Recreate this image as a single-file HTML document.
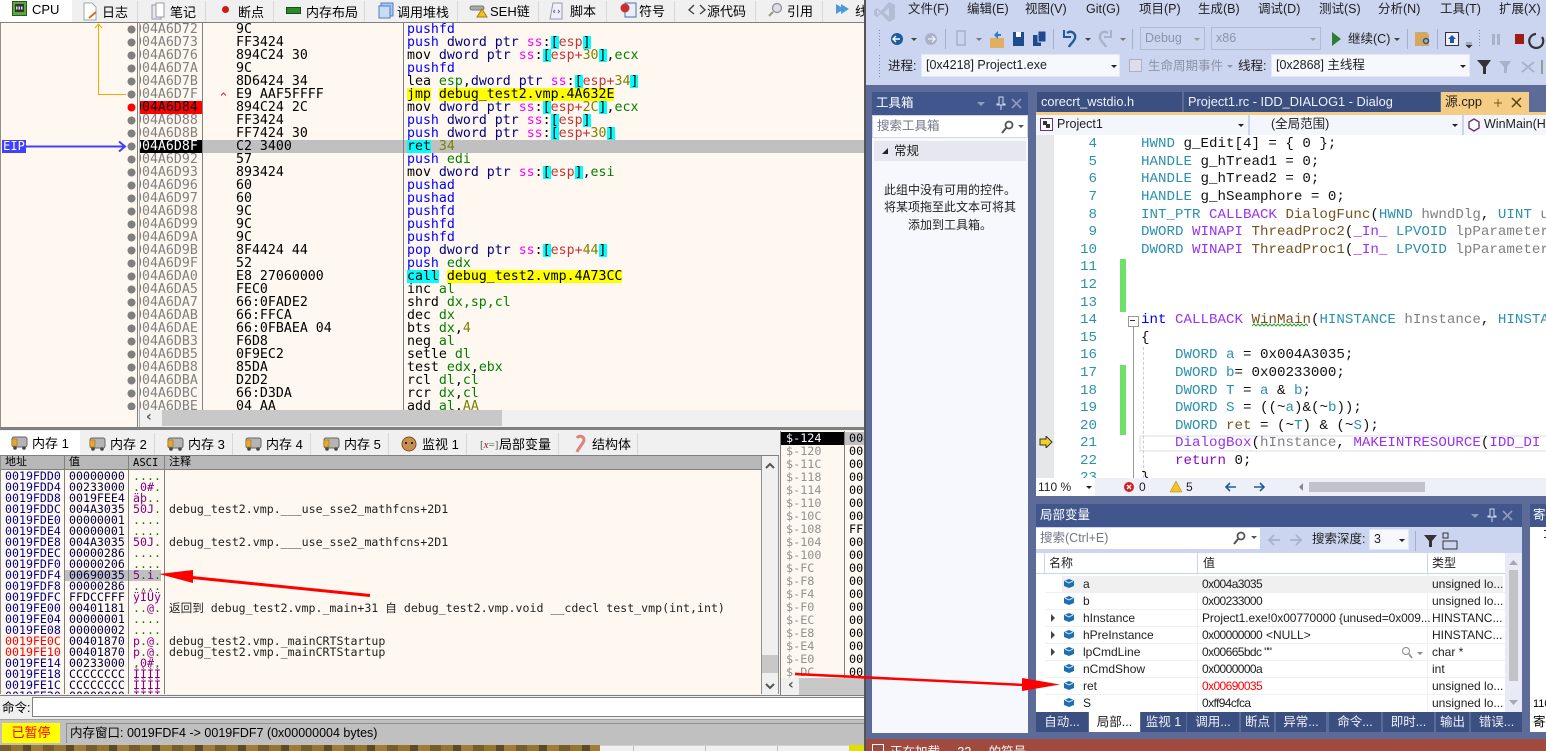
<!DOCTYPE html>
<html><head><meta charset="utf-8"><style>
html,body{margin:0;padding:0;width:1546px;height:751px;overflow:hidden;background:#f0f0f0}
body{position:relative;font:13px "Liberation Sans","Noto Sans CJK SC",sans-serif;color:#000}
.a{position:absolute}
pre{margin:0;position:absolute;white-space:pre}
.d{font:13.25px/13px "DejaVu Sans Mono",monospace}
.m{font:11.6px/11px "DejaVu Sans Mono","Noto Sans CJK SC",monospace}
.k{color:#0000ff}.n{color:#000080}.s{color:#ff00ff}.r{color:#c83232}.o{color:#808000}.g{color:#008000}
.c{display:inline-block;height:13px;line-height:13px;background:#00ffff;vertical-align:top}
.y{display:inline-block;height:13px;line-height:13px;background:#ffff00;vertical-align:top}
.tab{position:absolute;top:1px;height:21px;background:#f0f0f0;border-right:1px solid #d8d8d8;box-sizing:border-box}
.tt{position:absolute;white-space:nowrap;font-size:13px;line-height:16px}
.p{color:#800080}.dg{color:#008000}
.v{position:absolute;white-space:nowrap;font-size:12px;line-height:16px;color:#1e1e1e}
.hx{letter-spacing:-.6px}
.vl{position:absolute;white-space:pre;font:14.17px/17px "Liberation Mono","Noto Sans CJK SC",monospace;color:#111;left:1141px;margin-top:1px}
.ln{position:absolute;left:1060px;width:37px;text-align:right;font:14.17px/17px "Liberation Mono",monospace;color:#2b91af;margin-top:1px}
.ty{color:#2b91af}.mc{color:#9a30f0}.fn{color:#74531f}.pa{color:#808080}.kw{color:#0000ff}.rt{color:#8f08c4}
.row{position:absolute;left:1045px;width:460px;height:16px;border-bottom:1px solid #eef0f6}
.bt{position:absolute;top:712px;height:20px;background:#3b4f81;color:#f0f2fa;font-size:12.5px;line-height:20px;text-align:center;white-space:nowrap}
.cb{position:absolute;background:#f6f8fe;box-sizing:border-box;border:1px solid #e3e8f8;font-size:12.5px;line-height:21px;color:#1e1e1e;white-space:nowrap;padding-left:4px}
.arr{position:absolute;width:0;height:0;border-left:3px solid transparent;border-right:3px solid transparent;border-top:3px solid #222}
</style></head><body>

<!-- left window -->
<div class="a" style="left:0;top:0;width:865px;height:751px;background:#f0f0f0"></div>
<div class="a" style="left:0;top:0;width:72px;height:23px;background:#fff"></div>
<div class="tab" style="left:72px;width:66px"></div><div class="tab" style="left:138px;width:68px"></div><div class="tab" style="left:206px;width:68px"></div><div class="tab" style="left:274px;width:91px"></div><div class="tab" style="left:365px;width:93px"></div><div class="tab" style="left:458px;width:81px"></div><div class="tab" style="left:539px;width:68px"></div><div class="tab" style="left:607px;width:68px"></div><div class="tab" style="left:675px;width:81px"></div><div class="tab" style="left:756px;width:67px"></div><div class="tab" style="left:823px;width:42px"></div>
<div class="tt" style="left:32px;top:2px">CPU</div><div class="tt" style="left:102px;top:5px">日志</div><div class="tt" style="left:170px;top:5px">笔记</div><div class="tt" style="left:238px;top:5px">断点</div><div class="tt" style="left:306px;top:5px">内存布局</div><div class="tt" style="left:397px;top:5px">调用堆栈</div><div class="tt" style="left:490px;top:4px">SEH链</div><div class="tt" style="left:570px;top:4px">脚本</div><div class="tt" style="left:639px;top:4px">符号</div><div class="tt" style="left:707px;top:4px">源代码</div><div class="tt" style="left:787px;top:4px">引用</div><div class="tt" style="left:855px;top:4px;width:10px;overflow:hidden">线</div>
<svg class="a" style="left:0;top:0" width="865" height="23">
<rect x="12.500" y="1.500" width="14" height="14" fill="#5aa83c" stroke="#2a5a20"/><rect x="15" y="4" width="9" height="8" fill="#333"/><path d="M16 8h7" stroke="#ddd" stroke-width="3" stroke-dasharray="1.500 1"/>
<path d="M84 3h8l4 4v13h-12z" fill="#fff" stroke="#9aa"/><path d="M89 18l7-6" stroke="#d07020" stroke-width="2"/>
<path d="M152 5h9v14h-9z" fill="#e8e8ee" stroke="#99a"/><path d="M156 3h8v14h-8z" fill="#fff" stroke="#99a"/>
<circle cx="225.500" cy="9.500" r="3.500" fill="#d01818"/>
<rect x="286.500" y="7.500" width="14" height="6" fill="#2a8a2a" stroke="#145014"/>
<rect x="381" y="3" width="12" height="13" fill="#a8c8f0" stroke="#5080c0"/><rect x="379" y="6" width="11" height="12" fill="#c8dcf8" stroke="#5080c0"/>
<rect x="470" y="6" width="14" height="4" rx="2" fill="#aaa" stroke="#777"/><path d="M477 17l5-8 5 8z" fill="#f5c020" stroke="#a08010"/>
<path d="M553 3h9v16h-12z" fill="#eef" stroke="#99a"/><path d="M555 10l-1.500 1.500 1.500 1.500M558 10l1.500 1.500-1.500 1.500" fill="none" stroke="#668"/>
<rect x="625" y="3" width="11" height="14" fill="#e8eefc" stroke="#5070a0"/><circle cx="625" cy="8" r="4.500" fill="#c83030"/>
<path d="M694 5l-5 5 5 4M700 5l5 5-5 4" fill="none" stroke="#444" stroke-width="1.400"/>
<circle cx="777" cy="8" r="4.500" fill="#dde" stroke="#999" stroke-width="1.400"/><path d="M773 12l-4 4" stroke="#998" stroke-width="2"/>
<path d="M836 4l8 5-8 5zM841 4l8 5-8 5z" fill="#4a9ae0"/>
</svg>
<div class="a" style="left:0;top:22px;width:865px;height:1px;background:#808080"></div>

<!-- disasm -->
<div class="a" style="left:0;top:23px;width:865px;height:387px;background:#fff8f0;overflow:hidden">
<div class="a" style="left:140px;top:117px;width:725px;height:13px;background:#c0c0c0"></div>
<div class="a" style="left:140px;top:117px;width:62px;height:13px;background:#000"></div>
<div class="a" style="left:140px;top:78px;width:62px;height:13px;background:#ff0000"></div>
<pre class="d" style="left:134px;top:0;color:#808080;width:68px">004A6D72
004A6D73
004A6D76
004A6D7A
004A6D7B
004A6D7F
<span style="color:#000">004A6D84</span>
004A6D88
004A6D8B
<span style="color:#fff">004A6D8F</span>
004A6D92
004A6D93
004A6D96
004A6D97
004A6D98
004A6D99
004A6D9A
004A6D9B
004A6D9F
004A6DA0
004A6DA5
004A6DA7
004A6DAB
004A6DAE
004A6DB3
004A6DB5
004A6DB8
004A6DBA
004A6DBC
004A6DBE</pre>
<div class="a" style="left:0;top:0;width:139.500px;height:387px;background:#fff8f0"></div>
<pre class="d" style="left:236px;top:0;color:#000">9C
FF3424
894C24 30
9C
8D6424 34
E9 AAF5FFFF
894C24 2C
FF3424
FF7424 30
C2 3400
57
893424
60
60
9C
9C
9C
8F4424 44
52
E8 27060000
FEC0
66:0FADE2
66:FFCA
66:0FBAEA 04
F6D8
0F9EC2
85DA
D2D2
66:D3DA
04 AA</pre>
<pre class="d" style="left:407px;top:0;color:#000"><span class="k">pushfd</span>
<span class="k">push</span> <span class="n">dword ptr</span> <span class="s">ss</span>:<span class="c">[</span><span class="r">esp</span><span class="c">]</span>
mov <span class="n">dword ptr</span> <span class="s">ss</span>:<span class="c">[</span><span class="r">esp+</span><span class="o">30</span><span class="c">]</span>,<span class="g">ecx</span>
<span class="k">pushfd</span>
lea <span class="g">esp</span>,<span class="n">dword ptr</span> <span class="s">ss</span>:<span class="c">[</span><span class="r">esp+</span><span class="o">34</span><span class="c">]</span>
<span class="y">jmp</span> <span class="y">debug_test2.vmp.4A632E</span>
mov <span class="n">dword ptr</span> <span class="s">ss</span>:<span class="c">[</span><span class="r">esp+</span><span class="o">2C</span><span class="c">]</span>,<span class="g">ecx</span>
<span class="k">push</span> <span class="n">dword ptr</span> <span class="s">ss</span>:<span class="c">[</span><span class="r">esp</span><span class="c">]</span>
<span class="k">push</span> <span class="n">dword ptr</span> <span class="s">ss</span>:<span class="c">[</span><span class="r">esp+</span><span class="o">30</span><span class="c">]</span>
<span class="c">ret</span> <span class="o">34</span>
<span class="k">push</span> <span class="g">edi</span>
mov <span class="n">dword ptr</span> <span class="s">ss</span>:<span class="c">[</span><span class="r">esp</span><span class="c">]</span>,<span class="g">esi</span>
<span class="k">pushad</span>
<span class="k">pushad</span>
<span class="k">pushfd</span>
<span class="k">pushfd</span>
<span class="k">pushfd</span>
<span class="k">pop</span> <span class="n">dword ptr</span> <span class="s">ss</span>:<span class="c">[</span><span class="r">esp+</span><span class="o">44</span><span class="c">]</span>
<span class="k">push</span> <span class="g">edx</span>
<span class="c">call</span> <span class="y">debug_test2.vmp.4A73CC</span>
inc <span class="g">al</span>
shrd <span class="g">dx,sp,cl</span>
dec <span class="g">dx</span>
bts <span class="g">dx</span>,<span class="o">4</span>
neg <span class="g">al</span>
setle <span class="g">dl</span>
test <span class="g">edx</span>,<span class="g">ebx</span>
rcl <span class="g">dl</span>,<span class="g">cl</span>
rcr <span class="g">dx</span>,<span class="g">cl</span>
add <span class="g">al</span>,<span class="o">AA</span></pre>
<div class="a" style="left:2px;top:117px;width:24px;height:13px;background:#4040ff;color:#fff;font:12px/13px 'DejaVu Sans Mono',monospace;text-align:center">EIP</div>
</div>
<svg class="a" style="left:0;top:23px" width="240" height="388">
<path d="M98.500 2V71.500H126" fill="none" stroke="#ffa500"/><path d="M95 5l3.500-4 3.500 4" fill="none" stroke="#ffa500"/>
<path d="M221 72.500l2.500-2.500 2.500 2.500" fill="none" stroke="#e02020"/>
<path d="M26 123.500H124M119 118.500l6 5-6 5" fill="none" stroke="#4040ff" stroke-width="2"/>
<g fill="#808080"><circle cx="131.500" cy="6.500" r="4"/><circle cx="131.500" cy="19.500" r="4"/><circle cx="131.500" cy="32.500" r="4"/><circle cx="131.500" cy="45.500" r="4"/><circle cx="131.500" cy="58.500" r="4"/><circle cx="131.500" cy="71.500" r="4"/><circle cx="131.500" cy="84.500" r="4" fill="#ff0000"/><circle cx="131.500" cy="97.500" r="4"/><circle cx="131.500" cy="110.500" r="4"/><circle cx="131.500" cy="123.500" r="4"/><circle cx="131.500" cy="136.500" r="4"/><circle cx="131.500" cy="149.500" r="4"/><circle cx="131.500" cy="162.500" r="4"/><circle cx="131.500" cy="175.500" r="4"/><circle cx="131.500" cy="188.500" r="4"/><circle cx="131.500" cy="201.500" r="4"/><circle cx="131.500" cy="214.500" r="4"/><circle cx="131.500" cy="227.500" r="4"/><circle cx="131.500" cy="240.500" r="4"/><circle cx="131.500" cy="253.500" r="4"/><circle cx="131.500" cy="266.500" r="4"/><circle cx="131.500" cy="279.500" r="4"/><circle cx="131.500" cy="292.500" r="4"/><circle cx="131.500" cy="305.500" r="4"/><circle cx="131.500" cy="318.500" r="4"/><circle cx="131.500" cy="331.500" r="4"/><circle cx="131.500" cy="344.500" r="4"/><circle cx="131.500" cy="357.500" r="4"/><circle cx="131.500" cy="370.500" r="4"/><circle cx="131.500" cy="383.500" r="4"/></g>
</svg>
<div class="a" style="left:0;top:410px;width:137px;height:17px;background:#fff8f0"></div>
<div class="a" style="left:0;top:23px;width:1px;height:404px;background:#909090"></div>
<div class="a" style="left:137px;top:23px;width:1px;height:404px;background:#808080"></div>
<div class="a" style="left:139px;top:23px;width:1px;height:404px;background:#b0b0b0"></div>
<div class="a" style="left:202px;top:23px;width:1px;height:387px;background:#808080"></div>
<div class="a" style="left:403px;top:23px;width:1px;height:387px;background:#808080"></div>
<div class="a" style="left:140px;top:410px;width:725px;height:16px;background:#f0f0f0"></div>
<div class="a" style="left:162px;top:410px;width:340px;height:16px;background:#c8c8c8"></div>
<div class="a" style="left:146px;top:410px;font:bold 14px/15px 'DejaVu Sans',sans-serif;color:#555">‹</div>
<div class="a" style="left:0;top:427px;width:865px;height:3px;background:#808080"></div>

<!-- bottom tabs -->
<div class="a" style="left:0;top:431px;width:80px;height:25px;background:#fff"></div>
<div class="tab" style="left:80px;top:433px;width:75px;height:22px"></div><div class="tab" style="left:155px;top:433px;width:78px;height:22px"></div><div class="tab" style="left:233px;top:433px;width:78px;height:22px"></div><div class="tab" style="left:311px;top:433px;width:78px;height:22px"></div><div class="tab" style="left:389px;top:433px;width:78px;height:22px"></div><div class="tab" style="left:467px;top:433px;width:92px;height:22px"></div><div class="tab" style="left:559px;top:433px;width:79px;height:22px"></div>
<div class="tt" style="left:32px;top:436px">内存 1</div><div class="tt" style="left:110px;top:437px">内存 2</div><div class="tt" style="left:188px;top:437px">内存 3</div><div class="tt" style="left:266px;top:437px">内存 4</div><div class="tt" style="left:344px;top:437px">内存 5</div><div class="tt" style="left:422px;top:437px">监视 1</div>
<div class="tt" style="left:480px;top:437px;font:11px/16px 'Liberation Serif',serif;color:#555">[<i style="color:#802020">x</i>=]</div><div class="tt" style="left:499px;top:437px">局部变量</div><div class="tt" style="left:592px;top:437px">结构体</div>
<svg class="a" style="left:0;top:431px" width="640" height="24">
<defs><g id="tr"><rect x="0" y="2" width="15" height="10" rx="2" fill="#b4b4b4" stroke="#666"/><rect x="0" y="4" width="5" height="7" fill="#e8a830" stroke="#a07010" stroke-width=".6"/><circle cx="3" cy="13" r="1.800" fill="#444"/><circle cx="12" cy="13" r="1.800" fill="#444"/></g></defs>
<use href="#tr" x="12" y="4"/><use href="#tr" x="90" y="5"/><use href="#tr" x="168" y="5"/><use href="#tr" x="246" y="5"/><use href="#tr" x="324" y="5"/>
<circle cx="409" cy="13" r="7" fill="#c89050" stroke="#805020"/><circle cx="406" cy="12" r="1" fill="#000"/><circle cx="412" cy="12" r="1" fill="#000"/>
<path d="M577 7c2-3 7-2 7 2 0 3-5 7-7 12" fill="none" stroke="#e08080" stroke-width="3"/>
</svg>
<div class="a" style="left:0;top:455px;width:779px;height:1px;background:#808080"></div>

<!-- memory -->
<div class="a" style="left:0;top:456px;width:761px;height:238px;background:#fff8f0;overflow:hidden">
<div class="a" style="left:0;top:0;width:761px;height:14px;background:#b8b8b8;border-bottom:1px solid #808080;box-sizing:border-box"></div>
<div class="a" style="left:65px;top:114px;width:63px;height:11px;background:#c0c0c0"></div>
<div class="a" style="left:129px;top:114px;width:32px;height:11px;background:#c0c0c0"></div>
<pre class="m" style="left:5px;top:15px;color:#000080">0019FDD0
0019FDD4
0019FDD8
0019FDDC
0019FDE0
0019FDE4
0019FDE8
0019FDEC
0019FDF0
0019FDF4
0019FDF8
0019FDFC
0019FE00
0019FE04
0019FE08
<span style="color:#ff0000">0019FE0C</span>
<span style="color:#ff0000">0019FE10</span>
0019FE14
0019FE18
0019FE1C
0019FE20</pre>
<pre class="m" style="left:69px;top:15px;color:#000040">00000000
00233000
0019FEE4
004A3035
00000001
00000001
004A3035
00000286
00000206
00690035
00000286
FFDCCFFF
00401181
00000001
00000002
00401870
00401870
00233000
CCCCCCCC
CCCCCCCC
00000000</pre>
<pre class="m" style="left:133px;top:15px;color:#008000">....
<span class="dg">.</span><span class="p">0#</span>.
<span class="p">äþ</span>..
<span class="p">50J</span>.
....
....
<span class="p">50J</span>.
....
....
<span class="p">5</span>.<span class="p">i</span>.
....
<span class="p">ÿÏÜÿ</span>
..<span class="p">@</span>.
....
....
<span class="p">p</span>.<span class="p">@</span>.
<span class="p">p</span>.<span class="p">@</span>.
.<span class="p">0#</span>.
<span class="p">ÌÌÌÌ</span>
<span class="p">ÌÌÌÌ</span>
<span class="p">ÌÌÌÌ</span></pre>
<div class="a m" style="left:169px;top:48px;color:#222;white-space:pre">debug_test2.vmp.___use_sse2_mathfcns+2D1</div>
<div class="a m" style="left:169px;top:81px;color:#222;white-space:pre">debug_test2.vmp.___use_sse2_mathfcns+2D1</div>
<div class="a m" style="left:169px;top:147px;color:#222;white-space:pre">返回到 debug_test2.vmp._main+31 自 debug_test2.vmp.void __cdecl test_vmp(int,int)</div>
<div class="a m" style="left:169px;top:180px;color:#222;white-space:pre">debug_test2.vmp._mainCRTStartup</div>
<div class="a m" style="left:169px;top:191px;color:#222;white-space:pre">debug_test2.vmp._mainCRTStartup</div>
<div class="a" style="left:5px;top:0;font-size:11px;line-height:13px">地址</div><div class="a" style="left:69px;top:0;font-size:11px;line-height:13px">值</div><div class="a" style="left:133px;top:1px;font:10.500px/13px 'DejaVu Sans Mono',monospace">ASCI</div><div class="a" style="left:169px;top:0;font-size:11px;line-height:13px">注释</div>
<div class="a" style="left:0;top:0;width:1px;height:238px;background:#909090"></div>
<div class="a" style="left:64px;top:0;width:1px;height:238px;background:#808080"></div>
<div class="a" style="left:128px;top:0;width:1px;height:238px;background:#808080"></div>
<div class="a" style="left:164px;top:0;width:1px;height:238px;background:#808080"></div>
</div>
<div class="a" style="left:761px;top:456px;width:18px;height:238px;background:#f0f0f0;border-left:1px solid #909090;border-right:1px solid #909090;box-sizing:border-box"></div>
<div class="a" style="left:762px;top:655px;width:16px;height:18px;background:#c8c8c8"></div>
<svg class="a" style="left:762px;top:458px" width="16" height="236"><path d="M4 10l4-4 4 4M4 226l4 4 4-4" fill="none" stroke="#555" stroke-width="2"/></svg>

<!-- stack -->
<div class="a" style="left:780px;top:431px;width:85px;height:264px;background:#fff8f0;overflow:hidden;border-left:1px solid #808080;box-sizing:border-box">
<div class="a" style="left:0;top:1px;width:63px;height:13px;background:#000"></div>
<div class="a" style="left:64px;top:1px;width:20px;height:13px;background:#c0c0c0"></div>
<pre class="d" style="left:5px;top:1px;font-size:11.800px;color:#909090"><span style="color:#fff">$-124</span>
$-120
$-11C
$-118
$-114
$-110
$-10C
$-108
$-104
$-100
$-FC
$-F8
$-F4
$-F0
$-EC
$-E8
$-E4
$-E0
$-DC</pre>
<pre class="d" style="left:68px;top:1px;font-size:11.800px;color:#000">004
002
001
004
001
002
004
FF
004
000
000
000
000
004
000
004
000
000
002</pre>
<div class="a" style="left:63px;top:0;width:1px;height:264px;background:#808080"></div>
<div class="a" style="left:0;top:247px;width:85px;height:17px;background:#f0f0f0"></div>
<div class="a" style="left:18px;top:247px;width:67px;height:17px;background:#c8c8c8"></div>
<div class="a" style="left:7px;top:246px;font:bold 14px/17px 'DejaVu Sans',sans-serif;color:#555">‹</div>
</div>

<!-- command & status -->
<div class="a" style="left:0;top:695px;width:865px;height:1px;background:#808080"></div>
<div class="tt" style="left:2px;top:700px;font-size:12.500px">命令:</div>
<div class="a" style="left:32px;top:697px;width:833px;height:20px;background:#fff;border:1px solid #808080;box-sizing:border-box"></div>
<div class="a" style="left:0;top:719px;width:865px;height:26px;background:#c0c0c0;border-top:1px solid #a0a0a0;box-sizing:border-box"></div>
<div class="a" style="left:2px;top:723px;width:58px;height:20px;background:#ffff00;color:#ff0000;text-align:center;font-size:13px;line-height:19px">已暂停</div>
<div class="a" style="left:66px;top:723px;width:799px;height:20px;background:#c0c0c0;border-top:1px solid #909090;border-left:1px solid #909090;box-sizing:border-box;font-size:12.500px;line-height:19px;padding-left:3px">内存窗口: 0019FDF4 -&gt; 0019FDF7 (0x00000004 bytes)</div>
<div class="a" style="left:0;top:745px;width:600px;height:6px;background:repeating-linear-gradient(90deg,#7a5c28 0 11px,#94742e 11px 23px,#5e4a24 23px 31px,#a07c38 31px 43px)"></div>
<div class="a" style="left:600px;top:745px;width:250px;height:6px;background:#f0f0f0;border-top:1px solid #d0d0d0;box-sizing:border-box"></div>
<div class="a" style="left:633px;top:746px;width:1px;height:5px;background:#c0c0c0"></div><div class="a" style="left:705px;top:746px;width:1px;height:5px;background:#c0c0c0"></div><div class="a" style="left:777px;top:746px;width:1px;height:5px;background:#c0c0c0"></div>
<div class="a" style="left:849px;top:745px;width:15px;height:6px;background:#e0e000"></div>

<!-- VS window -->
<div class="a" style="left:864px;top:0;width:682px;height:751px;background:#5d6b99;border-left:2px solid #555;box-sizing:border-box"></div>
<div class="a" style="left:866px;top:0;width:680px;height:85px;background:#ccd5f0"></div>
<svg class="a" style="left:866px;top:0" width="40" height="22"><path d="M11 8l4 3 8-9 6 3v14l-6 3-8-8-4 3-3-2v-5zM11 10v5l3-2.500zM23 8l-5 4.500 5 4z" fill="#b4bcd4" fill-rule="evenodd"/></svg>
<div class="tt" style="left:908px;top:1px;font-size:12.500px;color:#1e1e1e">文件(F)</div><div class="tt" style="left:967px;top:1px;font-size:12.500px;color:#1e1e1e">编辑(E)</div><div class="tt" style="left:1025px;top:1px;font-size:12.500px;color:#1e1e1e">视图(V)</div><div class="tt" style="left:1086px;top:1px;font-size:12.500px;color:#1e1e1e">Git(G)</div><div class="tt" style="left:1139px;top:1px;font-size:12.500px;color:#1e1e1e">项目(P)</div><div class="tt" style="left:1198px;top:1px;font-size:12.500px;color:#1e1e1e">生成(B)</div><div class="tt" style="left:1258px;top:1px;font-size:12.500px;color:#1e1e1e">调试(D)</div><div class="tt" style="left:1319px;top:1px;font-size:12.500px;color:#1e1e1e">测试(S)</div><div class="tt" style="left:1378px;top:1px;font-size:12.500px;color:#1e1e1e">分析(N)</div><div class="tt" style="left:1440px;top:1px;font-size:12.500px;color:#1e1e1e">工具(T)</div><div class="tt" style="left:1499px;top:1px;font-size:12.500px;color:#1e1e1e">扩展(X)</div>

<!-- toolbar 1 icons -->
<svg class="a" style="left:866px;top:26px" width="680" height="26">
<path d="M13.500 4v18" stroke="#7f8ba8" stroke-dasharray="1 2"/>
<circle cx="31" cy="13" r="6" fill="#1e5a9e"/><path d="M34 13h-6M30 10l-3 3 3 3" stroke="#fff" fill="none" stroke-width="1.400"/>
<path d="M45 12h6l-3 3z" fill="#444"/>
<circle cx="65" cy="13" r="6" fill="#a9b2c8"/><path d="M62 13h6M66 10l3 3-3 3" stroke="#fff" fill="none"/>
<path d="M79.500 3v20" stroke="#a5b0cc"/>
<path d="M91 5h8v14h-8z" fill="none" stroke="#a9b2c8" stroke-width="1.500"/><path d="M110 12h6l-3 3z" fill="#777"/>
<path d="M124 12h14v10h-14z" fill="#e0b060"/><path d="M128 9l4-4v3h3v2h-3v3z" fill="#2a7ad0"/>
<path d="M147 6h11v14h-11z" fill="#1e4a8e"/><rect x="150" y="6" width="5" height="5" fill="#fff"/>
<path d="M167 9h8v11h-8z" fill="#1e4a8e"/><path d="M172 5h8v11h-8z" fill="#1e4a8e" stroke="#ccd5f0"/>
<path d="M187.500 3v20" stroke="#a5b0cc"/>
<path d="M201 7c4-3 9 0 8 5-1 4-5 6-6 9" fill="none" stroke="#1e5a9e" stroke-width="2.400"/><path d="M198 4v7h7" fill="none" stroke="#1e5a9e" stroke-width="2"/>
<path d="M219 12h6l-3 3z" fill="#444"/>
<path d="M242 7c-4-3-9 0-8 5 1 4 5 6 6 9" fill="none" stroke="#a9b2c8" stroke-width="2.400"/><path d="M245 4v7h-7" fill="none" stroke="#a9b2c8" stroke-width="2"/>
<path d="M254 12h6l-3 3z" fill="#777"/>
<path d="M266.500 3v20" stroke="#a5b0cc"/>
<path d="M466 6l9 7-9 7z" fill="#2e7d32"/>
<path d="M528 12h6l-3 3z" fill="#444"/>
<path d="M541.500 3v20" stroke="#a5b0cc"/>
<path d="M549 6h12l2 3v11h-14z" fill="#d4a860"/><circle cx="560" cy="15" r="2.500" fill="none" stroke="#1e5a9e" stroke-width="1.500"/>
<path d="M571.500 3v20" stroke="#a5b0cc"/>
<rect x="579.500" y="6.500" width="13" height="13" fill="#eef" stroke="#333"/><path d="M586 9l-4 4h2v4h4v-4h2z" fill="#1e5a9e"/>
<path d="M600 19h6l-3 3zM600 17h6" fill="#333" stroke="#333" stroke-width=".6"/>
<path d="M613.500 4v18" stroke="#7f8ba8" stroke-dasharray="1 2"/>
<rect x="626" y="8" width="3" height="11" fill="#a9b2c8"/><rect x="631" y="8" width="3" height="11" fill="#a9b2c8"/>
<rect x="649" y="8" width="9" height="10" fill="#a01c10"/>
<path d="M670 8a7 7 0 1 0 6 3" fill="none" stroke="#333" stroke-width="2.200"/>
</svg>
<div class="cb" style="left:1140px;top:27px;width:65px;height:23px;background:#ccd5f0;border-color:#b0bad0;color:#8c93a8">Debug</div>
<div class="cb" style="left:1211px;top:27px;width:110px;height:23px;background:#ccd5f0;border-color:#b0bad0;color:#8c93a8">x86</div>
<div class="arr" style="left:1194px;top:38px;border-top-color:#999"></div><div class="arr" style="left:1310px;top:38px;border-top-color:#999"></div>
<div class="tt" style="left:1348px;top:31px;font-size:12.500px;color:#1e1e1e">继续(C)</div>

<!-- toolbar 2 -->
<svg class="a" style="left:875px;top:54px" width="10" height="24"><path d="M4.500 1v22" stroke="#7f8ba8" stroke-dasharray="1 2"/></svg>
<div class="tt" style="left:888px;top:58px;font-size:12.500px;color:#1e1e1e">进程:</div>
<div class="cb" style="left:921px;top:54px;width:199px;height:23px">[0x4218] Project1.exe</div><div class="arr" style="left:1111px;top:65px"></div>
<svg class="a" style="left:1128px;top:56px" width="16" height="20"><rect x="1.500" y="3.500" width="12" height="12" fill="#dde" stroke="#a9b2c8"/></svg>
<div class="tt" style="left:1148px;top:58px;font-size:12.500px;color:#8c93a8">生命周期事件</div><div class="arr" style="left:1227px;top:65px;border-top-color:#8c93a8"></div>
<div class="tt" style="left:1238px;top:58px;font-size:12.500px;color:#1e1e1e">线程:</div>
<div class="cb" style="left:1271px;top:54px;width:199px;height:23px">[0x2868] 主线程</div><div class="arr" style="left:1460px;top:65px"></div>
<svg class="a" style="left:1476px;top:56px" width="70" height="20"><path d="M1 4h14l-5 7v7h-3v-7z" fill="#333"/><path d="M23 5h12l-4 6v6h-3v-6z" fill="#a9b2c8"/><path d="M46 6l12 10M58 6l-12 10" stroke="#a9b2c8" stroke-width="2"/><path d="M66 4v14" stroke="#999" stroke-width="2"/></svg>

<!-- toolbox -->
<div class="a" style="left:872px;top:92px;width:156px;height:641px;background:#f7f8fe"></div>
<div class="a" style="left:872px;top:92px;width:156px;height:23px;background:#40568c"></div>
<div class="tt" style="left:876px;top:95px;font-size:12.500px;color:#fff">工具箱</div>
<svg class="a" style="left:976px;top:95px" width="50" height="18"><path d="M1 7h8l-4 4z" fill="#8f9cc0"/><path d="M23 2h4v7h2v1h-8v-1h2zM25 10v5" stroke="#cfd8f0" fill="none"/><path d="M36 4l9 9M45 4l-9 9" stroke="#8f9cc0" stroke-width="1.600"/></svg>
<div class="a" style="left:872px;top:115px;width:156px;height:23px;background:#fff;border:1px solid #cfd6ea;box-sizing:border-box;font-size:12.500px;line-height:21px;color:#71768a;padding-left:4px">搜索工具箱</div>
<svg class="a" style="left:1000px;top:119px" width="26" height="16"><circle cx="9" cy="6" r="3.500" fill="none" stroke="#555" stroke-width="1.800"/><path d="M6 9l-4 5" stroke="#555" stroke-width="2"/><path d="M18 6h6l-3 3z" fill="#555"/></svg>
<div class="a" style="left:874px;top:141px;width:152px;height:20px;background:#e6e7ef;font-size:12.500px;line-height:20px;color:#1e1e1e;padding-left:20px;box-sizing:border-box">常规</div>
<svg class="a" style="left:881px;top:147px" width="10" height="10"><path d="M1 7h6V1z" fill="#222"/></svg>
<div class="a" style="left:874px;top:182px;width:152px;text-align:center;font-size:12px;line-height:17.300px;color:#1e1e1e">此组中没有可用的控件。<br>将某项拖至此文本可将其<br>添加到工具箱。</div>

<!-- doc tabs -->
<div class="bt" style="left:1037px;top:92px;width:145px;height:20px;text-align:left;padding-left:4px;box-sizing:border-box;font-size:12.800px">corecrt_wstdio.h</div>
<div class="bt" style="left:1184px;top:92px;width:256px;height:20px;text-align:left;padding-left:4px;box-sizing:border-box;font-size:12.800px">Project1.rc - IDD_DIALOG1 - Dialog</div>
<div class="bt" style="left:1441px;top:92px;width:88px;height:20px;text-align:left;padding-left:4px;box-sizing:border-box;background:#f5cc84;color:#1e1e1e;font-size:12.800px">源.cpp</div>
<svg class="a" style="left:1490px;top:96px" width="36" height="14"><path d="M4 7h4M12 7h-4M8 3v8" stroke="#7a5a10" fill="none"/><path d="M22 2l9 9M31 2l-9 9" stroke="#5a4010" stroke-width="1.500"/></svg>
<div class="a" style="left:1036px;top:112px;width:510px;height:3px;background:#f5cc84"></div>
<!-- nav -->
<div class="a" style="left:1036px;top:115px;width:510px;height:20px;background:#f4f6fd"></div>
<div class="a" style="left:1248px;top:115px;width:2px;height:20px;background:#ccd5f0"></div><div class="a" style="left:1462px;top:115px;width:2px;height:20px;background:#ccd5f0"></div>
<svg class="a" style="left:1039px;top:116px" width="16" height="16"><rect x="1.500" y="2.500" width="12" height="12" fill="#fff" stroke="#6a3080"/><rect x="4" y="5" width="4" height="4" fill="#333"/><rect x="7" y="8" width="4" height="4" fill="#333"/></svg>
<div class="tt" style="left:1057px;top:116px;font-size:12.500px;color:#1e1e1e">Project1</div>
<div class="tt" style="left:1271px;top:116px;font-size:12.500px;color:#1e1e1e">(全局范围)</div>
<div class="tt" style="left:1484px;top:116px;font-size:12.500px;color:#1e1e1e">WinMain(H</div>
<svg class="a" style="left:1467px;top:117px" width="14" height="16"><path d="M7 2l5 3v6l-5 3-5-3V5z" fill="#fff" stroke="#6a3080" stroke-width="1.400"/></svg>
<div class="arr" style="left:1238px;top:124px"></div><div class="arr" style="left:1452px;top:124px"></div>

<!-- editor -->
<div class="a" style="left:1036px;top:135px;width:510px;height:343px;background:#fff;overflow:hidden">
<div class="a" style="left:0;top:0;width:18px;height:343px;background:#e6e7e8"></div>
<div class="a" style="left:84px;top:124px;width:6px;height:53px;background:#6ce26c"></div>
<div class="a" style="left:84px;top:230px;width:6px;height:70px;background:#6ce26c"></div>
<div class="a" style="left:103px;top:300px;width:407px;height:17px;border:2px solid #eceef4;border-right:none;box-sizing:border-box"></div>
<div class="a" style="left:97px;top:191px;width:1px;height:152px;background:#999"></div>
<div class="a" style="left:92px;top:181px;width:9px;height:9px;background:#fff;border:1px solid #999"></div>
<div class="a" style="left:94px;top:185px;width:5px;height:1px;background:#333"></div>
<div class="a" style="left:107px;top:212px;height:131px;border-left:1px dashed #ccc"></div>
<svg class="a" style="left:216px;top:188px" width="60" height="5"><path d="M0 3l2-2 2 2 2-2 2 2 2-2 2 2 2-2 2 2 2-2 2 2 2-2 2 2 2-2 2 2 2-2 2 2 2-2 2 2 2-2 2 2 2-2 2 2 2-2 2 2 2-2 2 2 2-2 2 2" fill="none" stroke="#2e9e2e"/></svg>
<svg class="a" style="left:3px;top:301px" width="14" height="12"><path d="M1 3h6V0l6 6-6 6V9H1z" fill="#f0d020" stroke="#333"/></svg>
</div>
<div class="ln" style="top:135px">4</div><div class="ln" style="top:153px">5</div><div class="ln" style="top:170px">6</div><div class="ln" style="top:188px">7</div><div class="ln" style="top:206px">8</div><div class="ln" style="top:223px">9</div><div class="ln" style="top:241px">10</div><div class="ln" style="top:258px">11</div><div class="ln" style="top:276px">12</div><div class="ln" style="top:294px">13</div><div class="ln" style="top:311px">14</div><div class="ln" style="top:329px">15</div><div class="ln" style="top:346px">16</div><div class="ln" style="top:364px">17</div><div class="ln" style="top:382px">18</div><div class="ln" style="top:399px">19</div><div class="ln" style="top:417px">20</div><div class="ln" style="top:434px">21</div><div class="ln" style="top:452px">22</div><div class="ln" style="top:469px;height:8px;overflow:hidden">23</div>
<div class="vl" style="top:135px"><span class="ty">HWND</span> g_Edit[4] = { 0 };</div>
<div class="vl" style="top:153px"><span class="ty">HANDLE</span> g_hTread1 = 0;</div>
<div class="vl" style="top:170px"><span class="ty">HANDLE</span> g_hTread2 = 0;</div>
<div class="vl" style="top:188px"><span class="ty">HANDLE</span> g_hSeamphore = 0;</div>
<div class="vl" style="top:206px"><span class="ty">INT_PTR</span> <span class="mc">CALLBACK</span> <span class="fn">DialogFunc</span>(<span class="ty">HWND</span> <span class="pa">hwndDlg</span>, <span class="ty">UINT</span> <span class="pa">u</span></div>
<div class="vl" style="top:223px"><span class="ty">DWORD</span> <span class="mc">WINAPI</span> <span class="fn">ThreadProc2</span>(<span class="mc">_In_</span> <span class="ty">LPVOID</span> <span class="pa">lpParameter</span></div>
<div class="vl" style="top:241px"><span class="ty">DWORD</span> <span class="mc">WINAPI</span> <span class="fn">ThreadProc1</span>(<span class="mc">_In_</span> <span class="ty">LPVOID</span> <span class="pa">lpParameter</span></div>
<div class="vl" style="top:311px"><span class="kw">int</span> <span class="mc">CALLBACK</span> <span class="fn">WinMain</span>(<span class="ty">HINSTANCE</span> <span class="pa">hInstance</span>, <span class="ty">HINSTA</span></div>
<div class="vl" style="top:329px">{</div>
<div class="vl" style="top:346px">    <span class="ty">DWORD</span> <span class="ty">a</span> = 0x004A3035;</div>
<div class="vl" style="top:364px">    <span class="ty">DWORD</span> <span class="ty">b</span>= 0x00233000;</div>
<div class="vl" style="top:382px">    <span class="ty">DWORD</span> <span class="ty">T</span> = <span class="ty">a</span> &amp; <span class="ty">b</span>;</div>
<div class="vl" style="top:399px">    <span class="ty">DWORD</span> <span class="ty">S</span> = ((~<span class="ty">a</span>)&amp;(~<span class="ty">b</span>));</div>
<div class="vl" style="top:417px">    <span class="ty">DWORD</span> <span class="fn">ret</span> = (~<span class="ty">T</span>) &amp; (~<span class="ty">S</span>);</div>
<div class="vl" style="top:434px">    <span class="mc">DialogBox</span>(<span class="pa">hInstance</span>, <span class="mc">MAKEINTRESOURCE</span>(<span class="mc">IDD_DI</span></div>
<div class="vl" style="top:452px">    <span class="rt">return</span> 0;</div>
<div class="vl" style="top:469px;height:8px;overflow:hidden">}</div>

<!-- editor bottom bar -->
<div class="a" style="left:1036px;top:478px;width:510px;height:18px;background:#eef0f7"></div>
<div class="a" style="left:1036px;top:478px;width:59px;height:18px;background:#fff;font-size:12px;line-height:18px;padding-left:2px;box-sizing:border-box;color:#1e1e1e">110 %</div><div class="arr" style="left:1086px;top:486px"></div>
<svg class="a" style="left:1120px;top:479px" width="200" height="16"><circle cx="9" cy="8" r="5" fill="#d02020"/><path d="M7 6l4 4M11 6l-4 4" stroke="#fff" stroke-width="1.300"/><path d="M56 2l6 11h-12z" fill="#f5c020" stroke="#a08010" stroke-width=".5"/><path d="M106 8h10M110 4l-4 4 4 4" fill="none" stroke="#1e5a9e" stroke-width="1.600"/><path d="M134 8h10M140 4l4 4-4 4" fill="none" stroke="#1e5a9e" stroke-width="1.600"/><path d="M183 4l-4 4 4 4z" fill="#888"/></svg>
<div class="tt" style="left:1139px;top:479px;font-size:12px;color:#1e1e1e">0</div><div class="tt" style="left:1186px;top:479px;font-size:12px;color:#1e1e1e">5</div>
<div class="a" style="left:1309px;top:482px;width:116px;height:10px;background:#c2c3c9"></div>

<!-- locals -->
<div class="a" style="left:1036px;top:504px;width:486px;height:23px;background:#40568c;font-size:12.500px;line-height:23px;color:#fff;padding-left:4px;box-sizing:border-box">局部变量</div>
<svg class="a" style="left:1470px;top:507px" width="50" height="18"><path d="M1 7h8l-4 4z" fill="#8f9cc0"/><path d="M20 2h4v7h2v1h-8v-1h2zM22 10v5" stroke="#cfd8f0" fill="none"/><path d="M33 4l9 9M42 4l-9 9" stroke="#8f9cc0" stroke-width="1.600"/></svg>
<div class="a" style="left:1036px;top:527px;width:486px;height:26px;background:#ccd5f0"></div>
<div class="a" style="left:1036px;top:528px;width:224px;height:21px;background:#fff;font-size:12.500px;line-height:21px;color:#71768a;padding-left:4px;box-sizing:border-box">搜索(Ctrl+E)</div>
<svg class="a" style="left:1232px;top:530px" width="28" height="16"><circle cx="9" cy="6" r="3.500" fill="none" stroke="#555" stroke-width="1.800"/><path d="M6 9l-4 5" stroke="#555" stroke-width="2"/><path d="M19 6h6l-3 3z" fill="#555"/></svg>
<svg class="a" style="left:1266px;top:531px" width="44" height="18"><path d="M2 9h12M8 4l-5 5 5 5M24 9h12M30 4l5 5-5 5" fill="none" stroke="#a9b2c8" stroke-width="1.800"/></svg>
<div class="tt" style="left:1312px;top:531px;font-size:12.500px;color:#1e1e1e">搜索深度:</div>
<div class="cb" style="left:1369px;top:529px;width:40px;height:21px;line-height:19px">3</div><div class="arr" style="left:1399px;top:539px"></div>
<svg class="a" style="left:1414px;top:529px" width="50" height="22"><path d="M1.500 2v20" stroke="#a5b0cc"/><path d="M10 6h13l-5 6v6h-3v-6z" fill="#333"/><path d="M29 4h5v5h-5zM29 12h14v8H29z" fill="none" stroke="#333"/></svg>
<!-- locals grid -->
<div class="a" style="left:1036px;top:553px;width:469px;height:159px;background:#fff"></div>
<div class="a" style="left:1036px;top:573px;width:469px;height:1px;background:#ccd5f0"></div>
<div class="a" style="left:1044px;top:553px;width:1px;height:21px;background:#ccd5f0"></div>
<div class="a" style="left:1197px;top:553px;width:1px;height:159px;background:#eef0f6"></div><div class="a" style="left:1197px;top:553px;width:1px;height:21px;background:#ccd5f0"></div>
<div class="a" style="left:1427px;top:553px;width:1px;height:159px;background:#eef0f6"></div><div class="a" style="left:1427px;top:553px;width:1px;height:21px;background:#ccd5f0"></div>
<div class="v" style="left:1049px;top:555px">名称</div><div class="v" style="left:1203px;top:555px">值</div><div class="v" style="left:1432px;top:555px">类型</div>
<div class="a" style="left:1062px;top:576px;width:441px;height:16px;background:#f0f0f0"></div>
<div class="row" style="top:576px"></div><div class="row" style="top:593px"></div><div class="row" style="top:610px"></div><div class="row" style="top:627px"></div><div class="row" style="top:644px"></div><div class="row" style="top:661px"></div><div class="row" style="top:678px"></div>
<svg class="a" style="left:1046px;top:574px" width="30" height="138">
<defs><g id="bx"><path d="M18 5l5-2 5 2v5l-5 2-5-2z" fill="#1e6eb4"/><path d="M19 5l4 2 4-2" fill="none" stroke="#cfe2f5"/></g></defs>
<use href="#bx" y="2"/><use href="#bx" y="19"/><use href="#bx" y="36"/><use href="#bx" y="53"/><use href="#bx" y="70"/><use href="#bx" y="87"/><use href="#bx" y="104"/><use href="#bx" y="121"/>
<path d="M5 40l4 4-4 4zM5 57l4 4-4 4zM5 74l4 4-4 4z" fill="#444"/>
</svg>
<div class="v" style="left:1083px;top:576px">a</div><div class="v hx" style="left:1202px;top:576px">0x004a3035</div><div class="v" style="left:1432px;top:576px">unsigned lo...</div>
<div class="v" style="left:1083px;top:593px">b</div><div class="v hx" style="left:1202px;top:593px">0x00233000</div><div class="v" style="left:1432px;top:593px">unsigned lo...</div>
<div class="v" style="left:1083px;top:610px">hInstance</div><div class="v" style="left:1202px;top:610px;letter-spacing:-.1px">Project1.exe!0x00770000 {unused=0x009...</div><div class="v" style="left:1432px;top:610px">HINSTANC...</div>
<div class="v" style="left:1083px;top:627px">hPreInstance</div><div class="v hx" style="left:1202px;top:627px">0x00000000</div><div class="v" style="left:1266px;top:627px">&lt;NULL&gt;</div><div class="v" style="left:1432px;top:627px">HINSTANC...</div>
<div class="v" style="left:1083px;top:644px">lpCmdLine</div><div class="v hx" style="left:1202px;top:644px">0x00665bdc ""</div><div class="v" style="left:1432px;top:644px">char *</div>
<svg class="a" style="left:1400px;top:646px" width="26" height="14"><circle cx="6" cy="5" r="3.500" fill="none" stroke="#888"/><path d="M9 8l3 4" stroke="#888" stroke-width="1.500"/><path d="M17 6h6l-3 3z" fill="#888"/></svg>
<div class="v" style="left:1083px;top:661px">nCmdShow</div><div class="v hx" style="left:1202px;top:661px">0x0000000a</div><div class="v" style="left:1432px;top:661px">int</div>
<div class="v" style="left:1083px;top:678px">ret</div><div class="v hx" style="left:1202px;top:678px;color:#ff0000">0x00690035</div><div class="v" style="left:1432px;top:678px">unsigned lo...</div>
<div class="v" style="left:1083px;top:695px">S</div><div class="v hx" style="left:1202px;top:695px">0xff94cfca</div><div class="v" style="left:1432px;top:695px">unsigned lo...</div>
<div class="a" style="left:1505px;top:553px;width:17px;height:159px;background:#e8ebf6"></div>
<div class="a" style="left:1509px;top:570px;width:9px;height:111px;background:#c2c3c9"></div>
<svg class="a" style="left:1505px;top:555px" width="17" height="155"><path d="M4 10l4.500-5 4.500 5zM4 145l4.500 5 4.500-5z" fill="#a5a9b5"/></svg>
<div class="bt" style="left:1036px;width:52px">自动...</div><div class="bt" style="left:1089px;width:51px;background:#fff;color:#1e1e1e">局部...</div><div class="bt" style="left:1141px;width:45px">监视 1</div><div class="bt" style="left:1187px;width:52px">调用...</div><div class="bt" style="left:1241px;width:33px">断点</div><div class="bt" style="left:1276px;width:50px">异常...</div><div class="bt" style="left:1329px;width:52px">命令...</div><div class="bt" style="left:1383px;width:51px">即时...</div><div class="bt" style="left:1436px;width:33px">输出</div><div class="bt" style="left:1471px;width:51px">错误...</div>

<!-- registers -->
<div class="a" style="left:1530px;top:504px;width:16px;height:23px;background:#40568c;color:#fff;font-size:12.500px;line-height:23px;padding-left:3px;box-sizing:border-box;overflow:hidden">寄</div>
<div class="a" style="left:1530px;top:527px;width:16px;height:170px;background:#fff;font:12px/16px 'Liberation Mono',monospace;padding:0 0 0 13px;box-sizing:border-box;overflow:hidden">I</div>
<div class="a" style="left:1530px;top:697px;width:16px;height:15px;background:#fff;font-size:11px;line-height:15px;padding-left:3px;box-sizing:border-box;overflow:hidden">110</div>
<div class="a" style="left:1530px;top:712px;width:16px;height:20px;background:#fff;font-size:12.500px;line-height:20px;padding-left:3px;box-sizing:border-box;overflow:hidden">寄</div>

<!-- loading bar -->
<div class="a" style="left:866px;top:739px;width:680px;height:12px;background:#a14b40;overflow:hidden"></div>
<div class="a" style="left:872px;top:744px;white-space:nowrap;color:#fff;font-size:12.500px;line-height:16px;height:7px;overflow:hidden;width:300px"><span style="display:inline-block;width:10px;height:10px;border:1px solid #fff;margin-right:6px"></span>正在加载 ... 32 ... 的符号</div>

<!-- red arrows -->
<svg class="a" style="left:0;top:0" width="1546" height="751">
<path d="M370 595.500 192 577.500" stroke="#ff0000" stroke-width="3" fill="none"/><path d="M159 574 193 570 193 583z" fill="#ff0000"/>
<path d="M795 674 1024 685" stroke="#ff0000" stroke-width="2.500" fill="none"/><path d="M1060 684.500 1022 678 1022 691z" fill="#ff0000"/>
</svg>
</body></html>
